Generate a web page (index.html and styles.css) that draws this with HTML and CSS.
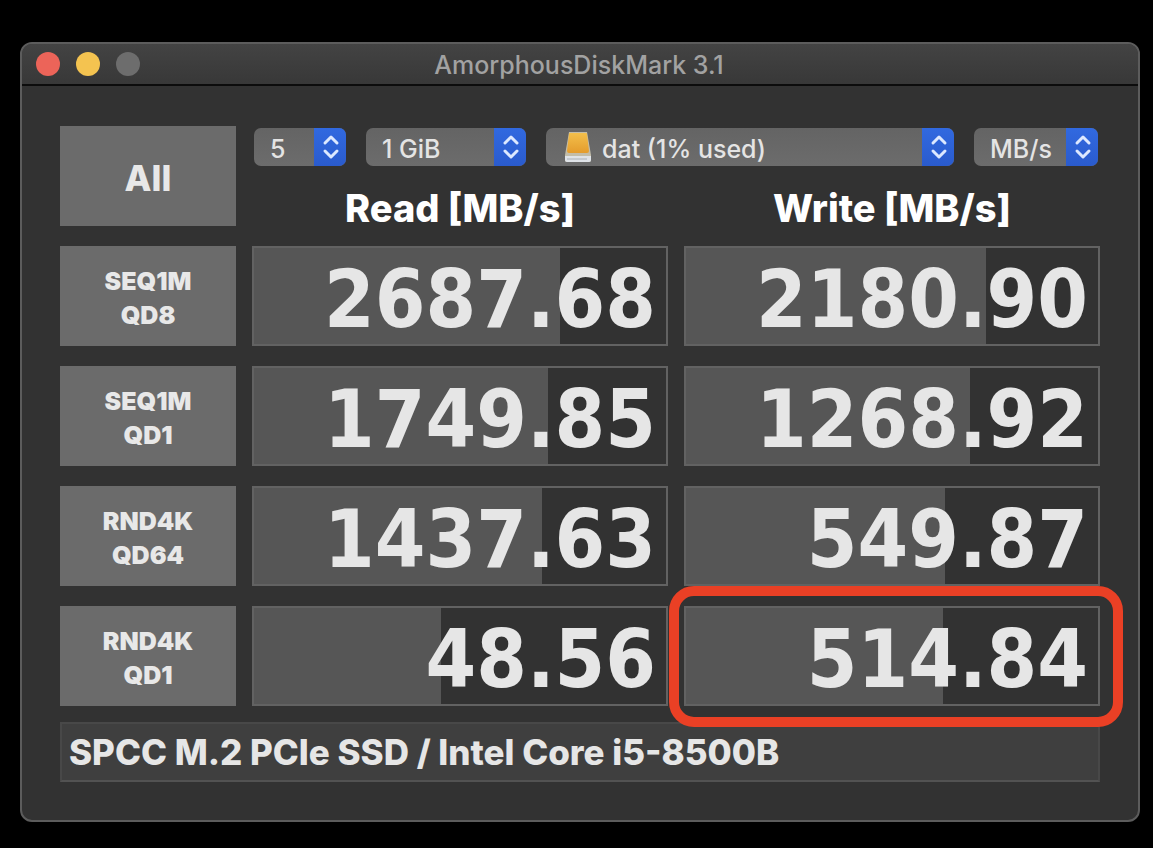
FILE: index.html
```html
<!DOCTYPE html>
<html lang="en">
<head>
  <meta charset="UTF-8" />
  <meta name="viewport" content="width=device-width, initial-scale=1.0" />
  <title>AmorphousDiskMark 3.1</title>
  <link rel="stylesheet" href="styles.css">
</head>
<body>

<div class="window">
  <header class="titlebar">
    <div class="lights">
      <button class="light close" aria-label="Close"></button>
      <button class="light minimize" aria-label="Minimize"></button>
      <button class="light zoom" aria-label="Zoom" disabled></button>
    </div>
    <h1 class="title">AmorphousDiskMark 3.1</h1>
  </header>

  <main class="content">
    <div class="grid">
      <!-- Settings and column headings -->
      <button class="test all">All</button>
      <div class="top">
        <div class="settings">
          <div class="popup count">
            <select aria-label="Test count"><option>5</option></select>
            <svg class="arrows" viewBox="0 0 32 38"><path d="M11 15l6-6 6 6M11 23l6 6 6-6" /></svg>
          </div>
          <div class="popup size">
            <select aria-label="Test size"><option>1 GiB</option></select>
            <svg class="arrows" viewBox="0 0 32 38"><path d="M11 15l6-6 6 6M11 23l6 6 6-6" /></svg>
          </div>
          <div class="popup disk">
            <select aria-label="Target disk"><option>dat (1% used)</option></select>
            <svg class="drive" viewBox="0 0 28 32">
              <defs>
                <linearGradient id="gold" x1="0" y1="0" x2="0" y2="1">
                  <stop offset="0" stop-color="#f3bf4b" />
                  <stop offset="1" stop-color="#e49c2d" />
                </linearGradient>
              </defs>
              <path d="M5 1h18l4 23v5q0 2-2 2H3q-2 0-2-2v-5z" fill="#c3bda9" />
              <path d="M6 2h16q1 0 1 1l2 17q0 2-2 2H5q-2 0-2-2L5 3q0-1 1-1z" fill="url(#gold)" />
              <path d="M1 25h26v4q0 2-2 2H3q-2 0-2-2z" fill="#dfe3e8" />
              <path d="M3 28h20" stroke="#aab0b7" />
            </svg>
            <svg class="arrows" viewBox="0 0 32 38"><path d="M11 15l6-6 6 6M11 23l6 6 6-6" /></svg>
          </div>
          <div class="popup unit">
            <select aria-label="Unit"><option>MB/s</option></select>
            <svg class="arrows" viewBox="0 0 32 38"><path d="M11 15l6-6 6 6M11 23l6 6 6-6" /></svg>
          </div>
        </div>
        <div class="headings">
          <h2>Read [MB/s]</h2>
          <h2>Write [MB/s]</h2>
        </div>
      </div>

      <!-- Sequential -->
      <button class="test">SEQ1M<br>QD8</button>
      <div class="result"><div class="bar" style="width: 74.3%"></div><span>2687.68</span></div>
      <div class="result"><div class="bar" style="width: 72.8%"></div><span>2180.90</span></div>

      <button class="test">SEQ1M<br>QD1</button>
      <div class="result"><div class="bar" style="width: 71.4%"></div><span>1749.85</span></div>
      <div class="result"><div class="bar" style="width: 68.9%"></div><span>1268.92</span></div>

      <!-- Random -->
      <button class="test">RND4K<br>QD64</button>
      <div class="result"><div class="bar" style="width: 69.9%"></div><span>1437.63</span></div>
      <div class="result"><div class="bar" style="width: 62.9%"></div><span>549.87</span></div>

      <button class="test">RND4K<br>QD1</button>
      <div class="result"><div class="bar" style="width: 45.3%"></div><span>48.56</span></div>
      <div class="result marked"><div class="bar" style="width: 62.4%"></div><span>514.84</span></div>
    </div>

    <input class="note" type="text" aria-label="Comment" value="SPCC M.2 PCIe SSD / Intel Core i5-8500B">
  </main>
</div>

</body>
</html>
```

FILE: styles.css
```css
* {
  box-sizing: border-box;
}

body {
  margin: 0;
  padding: 42px 13px 26px 20px;
  background: #000;
  font-family: Inter, "Liberation Sans", sans-serif;
}

button,
select,
input {
  margin: 0;
  border: none;
  font-family: inherit;
}

.window {
  background: #323232;
  border: 2px solid #5c5c5c;
  border-radius: 12px;
}

.titlebar {
  display: grid;
  grid-template-columns: 1fr auto 1fr;
  align-items: center;
  height: 42px;
  padding: 0 16px 0 14px;
  background: linear-gradient(#434343, #383838);
  border-bottom: 2px solid #0c0c0c;
  border-radius: 10px 10px 0 0;
}

.lights {
  display: flex;
  gap: 16px;
}

.light {
  width: 24px;
  height: 24px;
  padding: 0;
  border-radius: 50%;
}

.close {
  background: #ec6459;
}

.minimize {
  background: #f4c350;
}

.zoom {
  background: #6d6d6d;
}

.title {
  margin: 0;
  padding-top: 2px;
  color: #a2a2a2;
  font-size: 25px;
  font-weight: 500;
  line-height: 32px;
}

.content {
  padding: 40px 38px 38px;
}

.grid {
  display: grid;
  grid-template-columns: 176px 1fr 1fr;
  grid-auto-rows: 100px;
  gap: 20px 16px;
}

.test {
  padding: 4px 0 0;
  background: #6b6b6b;
  color: #e8e8e8;
  font-size: 25px;
  font-weight: 900;
  line-height: 34px;
}

.all {
  font-size: 35px;
  font-weight: 800;
}

/* Settings */
.top {
  grid-column: 2 / -1;
}

.settings {
  display: flex;
  gap: 20px;
  padding: 2px 2px 0;
}

.popup {
  display: grid;
  grid-template-columns: 1fr 32px;
  align-items: center;
  height: 38px;
  border-radius: 7px;
  background: linear-gradient(#646464, #6c6c6c);
  overflow: hidden;
}

.popup select {
  grid-area: 1 / 1 / 2 / -1;
  width: 100%;
  height: 38px;
  padding: 4px 0 0 16px;
  appearance: none;
  background: transparent;
  color: #e4e4e4;
  font-size: 25px;
  font-weight: 500;
}

.count {
  width: 92px;
}

.size {
  width: 160px;
}

.disk {
  flex: 1;
}

.unit {
  width: 124px;
}

.popup.disk select {
  padding-left: 56px;
}

.arrows {
  grid-area: 1 / 2;
  width: 32px;
  height: 38px;
  background: linear-gradient(#3169e0, #2a5bcd);
  fill: none;
  stroke: #dce8ff;
  stroke-width: 3;
  stroke-linecap: round;
  stroke-linejoin: round;
  pointer-events: none;
}

.drive {
  grid-area: 1 / 1;
  width: 28px;
  height: 32px;
  margin-left: 18px;
  pointer-events: none;
}

.headings {
  display: grid;
  grid-template-columns: 1fr 1fr;
  gap: 16px;
  padding-top: 18px;
}

.headings h2 {
  margin: 0;
  color: #fff;
  font-size: 38px;
  font-weight: 800;
  line-height: 48px;
  text-align: center;
}

/* Results */
.result {
  position: relative;
  display: grid;
  align-items: center;
  border: 2px solid #626262;
}

.bar {
  grid-area: 1 / 1;
  height: 100%;
  background: #565656;
}

.result span {
  grid-area: 1 / 1;
  padding: 6px 10px 0 0;
  color: #e6e6e6;
  font-family: "DejaVu Sans Condensed", "DejaVu Sans", sans-serif;
  font-size: 81px;
  font-weight: 700;
  line-height: 90px;
  text-align: right;
}

.marked::after {
  content: "";
  position: absolute;
  inset: -22px -25px -23px -17px;
  border: 10px solid #ea4025;
  border-radius: 25px;
}

.note {
  display: block;
  width: 100%;
  height: 60px;
  margin-top: 16px;
  padding: 0 7px;
  background: #3f3f3f;
  border: 2px solid #484848;
  border-bottom-color: #525252;
  color: #e6e6e6;
  font-size: 35px;
  font-weight: 800;
}
```
